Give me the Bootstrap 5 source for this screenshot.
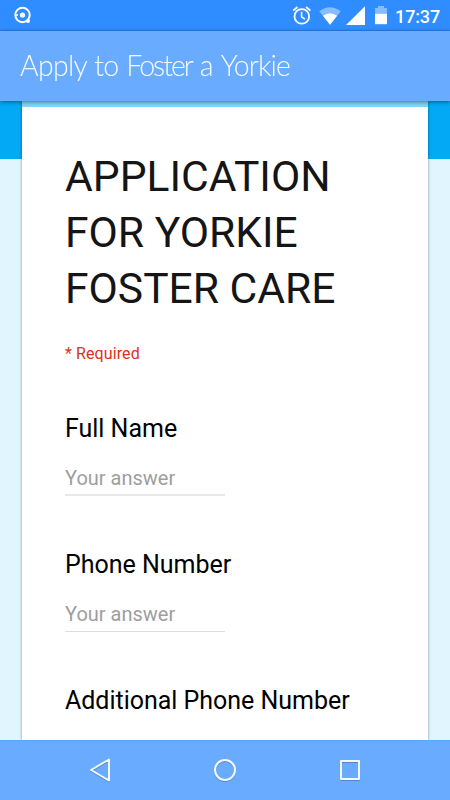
<!DOCTYPE html>
<html lang="en">
<head>
<meta charset="utf-8">
<meta name="viewport" content="width=device-width, initial-scale=1">
<title>Apply to Foster a Yorkie</title>
<link href="https://cdn.jsdelivr.net/npm/bootstrap@5.3.0/dist/css/bootstrap.min.css" rel="stylesheet">
<style>
  body { font-family: Roboto, "Liberation Sans", sans-serif; background: #e1f5fe; }
  .screen { height: 800px; width: 450px; }
  .status-bar { height: 31px; background: #2f8dff; border-bottom: 1px solid #2880ea; padding: 0 10px 0 13px; }
  .status-icons { margin-right: 7px; }
  .clock { font-size: 18px; font-weight: 500; line-height: 30px; letter-spacing: -.15px; padding-top: 3px; }
  .app-bar { height: 70px; background: #69abff; padding-left: 20px; z-index: 2; box-shadow: 0 1px 4px rgba(0,0,0,.45); }
  .app-title { font-family: Lato, sans-serif; font-weight: 300; font-size: 28.5px; line-height: 69px; letter-spacing: -.7px; word-spacing: .8px; opacity: .95; }
  .app-title .tight { letter-spacing: -2px; }
  .app-title .snug { letter-spacing: -.9px; }
  .form-page { background: linear-gradient(#03a9f4 58px, #e1f5fe 58px); padding: 0 22px; }
  .sheet { border-top: 6px solid #81d4fa; padding: 41px 42px 0 43px; box-shadow: 0 0 3px rgba(0,0,0,.4); color: #000; }
  .form-title { font-size: 42.6px; line-height: 56px; color: #151515; }
  .required-note { font-size: 16px; line-height: 20px; letter-spacing: .1px; color: #df2f20; margin-top: 28px; }
  .question { height: 136px; }
  .question-label { font-size: 25px; line-height: 34px; letter-spacing: -.02px; }
  .answer { width: 160px; height: 32px; margin-top: 18px; font-size: 20px; line-height: 26px; border-bottom: 1px solid #dedede; }
  .answer.form-control-plaintext { padding: 0 0 4px; }
  .answer::placeholder { color: #9e9e9e; opacity: 1; }
  .answer.first-answer { border-bottom: 2px solid #e9e9e9; }
  .nav-keys { height: 60px; background: #69abff; border-top: 1px solid #5aa5ff; z-index: 2; }
  .nav-keys svg { filter: drop-shadow(0 1px 0 rgba(0,0,0,.2)); }
</style>
</head>
<body>
<div class="screen d-flex flex-column overflow-hidden">
  <header class="status-bar d-flex align-items-center flex-shrink-0 text-white">
    <svg width="20" height="20" viewBox="0 0 20 20" fill="none" stroke="#fff">
      <circle cx="9.5" cy="10" r="7.2" stroke-width="2"/>
      <circle cx="9.5" cy="10" r="2.6" fill="#fff" stroke="none"/>
      <path d="M2.5 10H5" stroke-width="1.6"/>
      <circle cx="15" cy="16" r="2" fill="#fff" stroke="none"/>
    </svg>
    <svg class="status-icons ms-auto" width="98" height="30" viewBox="290 0 98 30" fill="#fff">
      <g fill="none" stroke="#fff" stroke-width="1.8">
        <circle cx="301.8" cy="16.4" r="7.3"/>
        <path d="M301.6 11.8V17L305 19.2" stroke-width="1.5"/>
        <path d="M293.2 10.6l4.3-3.6M310.4 10.6l-4.3-3.6"/>
      </g>
      <path d="M319.2 11.2Q330 3.2 340.8 11.2L330 24.8Z" opacity=".42"/>
      <path d="M322.9 15.8Q330 10.7 337.1 15.8L330 24.8Z"/>
      <path d="M346 25L365 6.2V25Z"/>
      <path d="M375 13.7V8H378V6H384V8H387V13.7Z" opacity=".42"/>
      <path d="M375 13.7H387V24.2H375Z"/>
    </svg>
    <span class="clock">17:37</span>
  </header>
  <div class="app-bar position-relative flex-shrink-0">
    <h1 class="app-title m-0 text-white text-nowrap">Apply to <span class="tight">Foster</span> a <span class="snug">Yorkie</span></h1>
  </div>
  <main class="form-page d-flex flex-grow-1 overflow-hidden">
    <form class="sheet bg-white flex-grow-1">
      <h2 class="form-title fw-normal mb-0">APPLICATION<br>FOR YORKIE<br>FOSTER CARE</h2>
      <p class="required-note mb-0">* Required</p>
      <div class="question d-flex flex-column mt-5">
        <label class="question-label" for="full-name">Full Name</label>
        <input id="full-name" class="answer first-answer form-control-plaintext" placeholder="Your answer">
      </div>
      <div class="question d-flex flex-column">
        <label class="question-label" for="phone">Phone Number</label>
        <input id="phone" class="answer form-control-plaintext" placeholder="Your answer">
      </div>
      <div class="question d-flex flex-column">
        <label class="question-label text-nowrap" for="phone-extra">Additional Phone Number</label>
        <input id="phone-extra" class="answer form-control-plaintext" placeholder="Your answer">
      </div>
    </form>
  </main>
  <nav class="nav-keys position-relative flex-shrink-0">
    <svg class="d-block" width="450" height="59" viewBox="0 741 450 59" fill="none" stroke="#f4f8ff" stroke-width="2" stroke-linejoin="round">
      <path d="M109 759.5V780.5L91 770Z"/>
      <circle cx="225" cy="770" r="10"/>
      <rect x="341" y="761" width="18" height="18"/>
    </svg>
  </nav>
</div>
<script src="https://cdn.jsdelivr.net/npm/bootstrap@5.3.0/dist/js/bootstrap.bundle.min.js"></script>
</body>
</html>
